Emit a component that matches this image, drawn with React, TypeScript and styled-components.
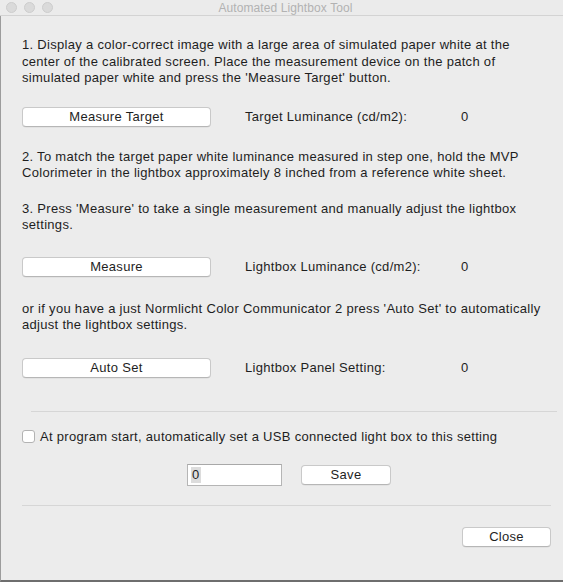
import React, { useState } from "react";
import styled, { createGlobalStyle } from "styled-components";

const GlobalStyle = createGlobalStyle`
  html, body {
    margin: 0;
    padding: 0;
    background: #ececec;
  }
  * {
    box-sizing: border-box;
  }
`;

const Window = styled.div`
  width: 563px;
  height: 582px;
  display: flex;
  flex-direction: column;
  background: #ececec;
  font-family: "Liberation Sans", Arial, sans-serif;
  font-size: 13px;
  letter-spacing: 0.3px;
  color: #1e1e1e;
  overflow: hidden;
`;

const TitleBar = styled.div`
  position: relative;
  height: 16px;
  flex-shrink: 0;
  display: flex;
  align-items: center;
  justify-content: center;
  border-bottom: 1px solid #d3d3d3;
  background: #ebebeb;
`;

const Lights = styled.div`
  position: absolute;
  left: 6px;
  top: 2px;
  display: flex;
  gap: 7px;
`;

const Light = styled.span`
  width: 11px;
  height: 11px;
  border-radius: 50%;
  background: #dadada;
  border: 1px solid #cdcdcd;
`;

const Title = styled.div`
  color: #b2b2b2;
  font-size: 12px;
  letter-spacing: 0.1px;
  margin-left: 8px;
`;

const Body = styled.div`
  flex: 1;
  display: flex;
  flex-direction: column;
  padding: 21px 12px 0 21px;
  border-left: 1px solid #9c9c9c;
  border-bottom: 2px solid #6e6e6e;
`;

const Paragraph = styled.div<{ $top: number }>`
  margin-top: ${(p) => p.$top}px;
  line-height: 16.5px;
`;

const Line = styled.span`
  display: block;
  white-space: nowrap;
`;

const Row = styled.div<{ $top: number }>`
  margin-top: ${(p) => p.$top}px;
  display: flex;
  align-items: center;
  height: 20px;
`;

const Button = styled.button<{ $width: number }>`
  width: ${(p) => p.$width}px;
  height: 20px;
  padding: 0;
  background: #ffffff;
  border: 1px solid #c9c9c9;
  border-bottom-color: #b6b6b6;
  border-radius: 4px;
  box-shadow: 0 0.5px 0.5px rgba(0, 0, 0, 0.08);
  font-family: inherit;
  font-size: 13px;
  letter-spacing: 0.3px;
  color: #1e1e1e;
  line-height: 18px;
`;

const Label = styled.span`
  margin-left: 34px;
  width: 216px;
`;

const Value = styled.span``;

const Divider = styled.div<{ $top: number; $left: number; $right: number }>`
  margin-top: ${(p) => p.$top}px;
  margin-left: ${(p) => p.$left}px;
  margin-right: ${(p) => p.$right}px;
  height: 1px;
  background: #d6d6d6;
`;

const CheckRow = styled.label`
  margin-top: 17px;
  display: flex;
  align-items: center;
  gap: 5px;
  height: 16px;
`;

const Check = styled.span`
  width: 13px;
  height: 13px;
  border-radius: 3px;
  background: #fff;
  border: 1px solid #b3b3b3;
`;

const SaveRow = styled.div`
  margin-top: 19px;
  display: flex;
  align-items: center;
  padding-left: 165px;
  gap: 19px;
  height: 22px;
`;

const NumberBox = styled.div`
  width: 95px;
  height: 22px;
  background: #fff;
  border: 1px solid #b5b5b5;
  border-top-color: #a8a8a8;
  display: flex;
  align-items: center;
  padding-left: 3px;
`;

const Selected = styled.span`
  background: #dcdcdc;
  line-height: 16px;
  padding: 0 1px;
`;

const Footer = styled.div`
  margin-top: 21px;
  display: flex;
  justify-content: flex-end;
`;

export default function App() {
  const [auto] = useState(false);

  return (
    <>
      <GlobalStyle />
      <Window>
        <TitleBar>
          <Lights>
            <Light />
            <Light />
            <Light />
          </Lights>
          <Title>Automated Lightbox Tool</Title>
        </TitleBar>
        <Body>
          <Paragraph $top={0}>
            <Line>1. Display a color-correct image with a large area of simulated paper white at the</Line>
            <Line>center of the calibrated screen. Place the measurement device on the patch of</Line>
            <Line>simulated paper white and press the 'Measure Target' button.</Line>
          </Paragraph>
          <Row $top={20}>
            <Button $width={189}>Measure Target</Button>
            <Label>Target Luminance (cd/m2):</Label>
            <Value>0</Value>
          </Row>
          <Paragraph $top={22}>
            <Line>2. To match the target paper white luminance measured in step one, hold the MVP</Line>
            <Line>Colorimeter in the lightbox approximately 8 inched from a reference white sheet.</Line>
          </Paragraph>
          <Paragraph $top={19}>
            <Line>3. Press 'Measure' to take a single measurement and manually adjust the lightbox</Line>
            <Line>settings.</Line>
          </Paragraph>
          <Row $top={23}>
            <Button $width={189}>Measure</Button>
            <Label>Lightbox Luminance (cd/m2):</Label>
            <Value>0</Value>
          </Row>
          <Paragraph $top={24}>
            <Line>or if you have a just Normlicht Color Communicator 2 press 'Auto Set' to automatically</Line>
            <Line>adjust the lightbox settings.</Line>
          </Paragraph>
          <Row $top={24}>
            <Button $width={189}>Auto Set</Button>
            <Label>Lightbox Panel Setting:</Label>
            <Value>0</Value>
          </Row>
          <Divider $top={33} $left={9} $right={-6} />
          <CheckRow>
            <Check aria-checked={auto} />
            At program start, automatically set a USB connected light box to this setting
          </CheckRow>
          <SaveRow>
            <NumberBox>
              <Selected>0</Selected>
            </NumberBox>
            <Button $width={90}>Save</Button>
          </SaveRow>
          <Divider $top={19} $left={0} $right={0} />
          <Footer>
            <Button $width={89}>Close</Button>
          </Footer>
        </Body>
      </Window>
    </>
  );
}
